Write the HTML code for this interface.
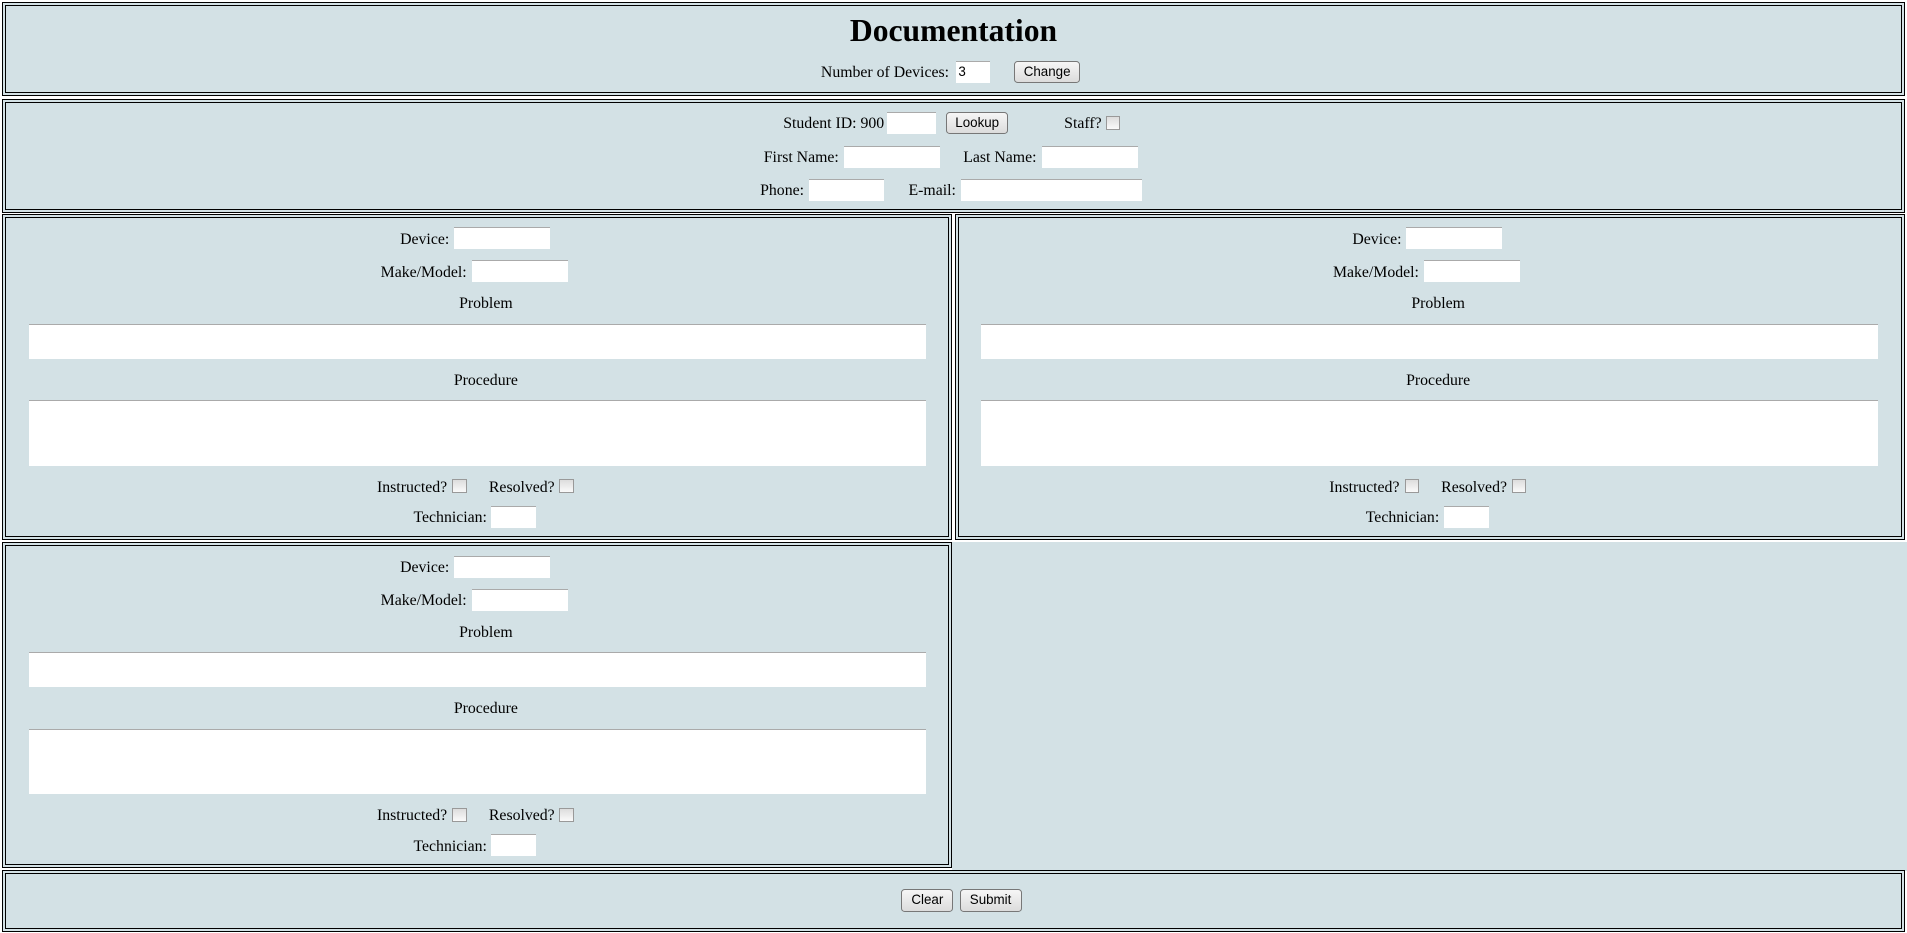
<!DOCTYPE html>
<html><head><meta charset="utf-8"><style>
html,body{margin:0;padding:0;background:#fff;overflow:hidden}
#w{zoom:1.2162;position:relative;width:1568px;height:767px;font-family:"Liberation Serif",serif;font-size:13px;color:#000}
.b{position:absolute;background:#d3e1e5;border:4px double #000;box-sizing:border-box}
.t{position:absolute;line-height:16px;white-space:nowrap}
.i{position:absolute;background:#fff;border-top:1px solid #aaa;box-sizing:border-box}
.btn{position:absolute;box-sizing:border-box;border:1px solid #777;border-radius:3px;background:linear-gradient(#f6f6f6,#dcdcdc);font-family:"Liberation Sans",sans-serif;font-size:11px;line-height:16px;text-align:center}
.cb{position:absolute;width:10px;height:10px;border:1px solid #999;background:linear-gradient(#ddd,#fafafa)}
.p{position:absolute;width:781px;height:268px}
</style></head><body><div id="w">
<div class="b" style="left:2px;top:2px;width:1564px;height:77px"></div>
<div class="t" style="left:0;width:1568px;text-align:center;top:11px;font-size:26px;line-height:30px;font-weight:bold">Documentation</div>
<div class="t" style="left:675px;top:52px">Number of Devices:</div>
<div class="i" style="left:786px;top:50px;width:28px;height:18px"><span style="position:absolute;left:2px;top:0;font-family:'Liberation Sans',sans-serif;font-size:11px;line-height:17px">3</span></div>
<div class="btn" style="left:834px;top:50px;width:54px;height:18px">Change</div>

<div class="b" style="left:2px;top:81px;width:1564px;height:94px"></div>
<div class="t" style="left:644px;top:94px">Student ID: 900</div>
<div class="i" style="left:729px;top:92px;width:41px;height:18px"></div>
<div class="btn" style="left:778px;top:92px;width:51px;height:18px">Lookup</div>
<div class="t" style="left:875px;top:94px">Staff?</div>
<div class="cb" style="left:909px;top:95px"></div>
<div class="t" style="left:628px;top:122px">First Name:</div>
<div class="i" style="left:694px;top:120px;width:79px;height:18px"></div>
<div class="t" style="left:792px;top:122px">Last Name:</div>
<div class="i" style="left:857px;top:120px;width:79px;height:18px"></div>
<div class="t" style="left:625px;top:149px">Phone:</div>
<div class="i" style="left:665px;top:147px;width:62px;height:18px"></div>
<div class="t" style="left:747px;top:149px">E-mail:</div>
<div class="i" style="left:790px;top:147px;width:149px;height:18px"></div>

<div class="p" style="left:2px;top:176px">
<div class="b" style="left:0;top:0;width:781px;height:268px"></div>
<div class="t" style="left:327px;top:13px">Device:</div>
<div class="i" style="left:371px;top:11px;width:79px;height:18px"></div>
<div class="t" style="left:311px;top:40px">Make/Model:</div>
<div class="i" style="left:386px;top:38px;width:79px;height:18px"></div>
<div class="t" style="left:0;width:795px;text-align:center;top:66px">Problem</div>
<div class="i" style="left:22px;top:90px;width:737px;height:29px"></div>
<div class="t" style="left:0;width:795px;text-align:center;top:129px">Procedure</div>
<div class="i" style="left:22px;top:153px;width:737px;height:54px"></div>
<div class="t" style="left:308px;top:217px">Instructed?</div>
<div class="cb" style="left:370px;top:218px"></div>
<div class="t" style="left:400px;top:217px">Resolved?</div>
<div class="cb" style="left:458px;top:218px"></div>
<div class="t" style="left:338px;top:242px">Technician:</div>
<div class="i" style="left:402px;top:240px;width:37px;height:18px"></div>
</div>

<div class="p" style="left:785px;top:176px">
<div class="b" style="left:0;top:0;width:781px;height:268px"></div>
<div class="t" style="left:327px;top:13px">Device:</div>
<div class="i" style="left:371px;top:11px;width:79px;height:18px"></div>
<div class="t" style="left:311px;top:40px">Make/Model:</div>
<div class="i" style="left:386px;top:38px;width:79px;height:18px"></div>
<div class="t" style="left:0;width:795px;text-align:center;top:66px">Problem</div>
<div class="i" style="left:22px;top:90px;width:737px;height:29px"></div>
<div class="t" style="left:0;width:795px;text-align:center;top:129px">Procedure</div>
<div class="i" style="left:22px;top:153px;width:737px;height:54px"></div>
<div class="t" style="left:308px;top:217px">Instructed?</div>
<div class="cb" style="left:370px;top:218px"></div>
<div class="t" style="left:400px;top:217px">Resolved?</div>
<div class="cb" style="left:458px;top:218px"></div>
<div class="t" style="left:338px;top:242px">Technician:</div>
<div class="i" style="left:402px;top:240px;width:37px;height:18px"></div>
</div>

<div class="b" style="left:783px;top:446px;width:785px;height:270px;border:none"></div>

<div class="p" style="left:2px;top:446px">
<div class="b" style="left:0;top:0;width:781px;height:268px"></div>
<div class="t" style="left:327px;top:13px">Device:</div>
<div class="i" style="left:371px;top:11px;width:79px;height:18px"></div>
<div class="t" style="left:311px;top:40px">Make/Model:</div>
<div class="i" style="left:386px;top:38px;width:79px;height:18px"></div>
<div class="t" style="left:0;width:795px;text-align:center;top:66px">Problem</div>
<div class="i" style="left:22px;top:90px;width:737px;height:29px"></div>
<div class="t" style="left:0;width:795px;text-align:center;top:129px">Procedure</div>
<div class="i" style="left:22px;top:153px;width:737px;height:54px"></div>
<div class="t" style="left:308px;top:217px">Instructed?</div>
<div class="cb" style="left:370px;top:218px"></div>
<div class="t" style="left:400px;top:217px">Resolved?</div>
<div class="cb" style="left:458px;top:218px"></div>
<div class="t" style="left:338px;top:242px">Technician:</div>
<div class="i" style="left:402px;top:240px;width:37px;height:18px"></div>
</div>

<div class="b" style="left:2px;top:715px;width:1564px;height:51px"></div>
<div class="btn" style="left:741px;top:731px;width:43px;height:19px">Clear</div>
<div class="btn" style="left:789px;top:731px;width:51px;height:19px">Submit</div>
</div></body></html>
